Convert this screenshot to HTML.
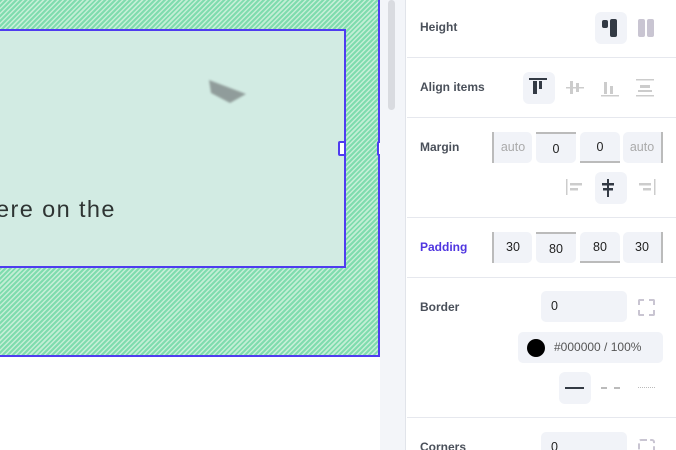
<!DOCTYPE html><html><head><style>
*{box-sizing:border-box;margin:0;padding:0}
html,body{width:676px;height:450px;overflow:hidden}
body{background:#fff;font-family:"Liberation Sans",sans-serif;position:relative}
.a{position:absolute}
.hatch{left:0;top:0;width:380px;height:357px;background:repeating-linear-gradient(135deg,#7fdcae 0 2px,#c4eed6 2px 3.5px);border-right:2px solid #4f3cf0;border-bottom:2px solid #4f3cf0}
.inner{left:-2px;top:29px;width:348px;height:239px;background:#d2ebe3;border:2px solid #4f3cf0}
.h{width:8px;height:15px;background:#fff;border:2px solid #4f3cf0;border-radius:2px}
.lbl{font-size:12px;font-weight:bold;color:#4a505a;left:420px}
.div{left:407px;width:269px;height:1px;background:#e6e8ee}
.box{background:#f1f3f8;border-radius:5px;font-size:12.5px;color:#222;text-align:center;line-height:30px;height:31px}
.ib{width:32px;height:32px;border-radius:6px}
</style></head><body>
<div class="a hatch"></div>
<div class="a inner"></div>
<div class="a" style="left:-4px;top:196px;font-size:23.5px;color:#2e3433;letter-spacing:1.4px">ere on the</div>
<svg class="a" style="left:206px;top:78px" width="44" height="28"><defs><filter id="b"><feGaussianBlur stdDeviation="1"/></filter></defs><polygon points="3,2 40,16 24,25 5,15" fill="#6e7374" opacity=".65" filter="url(#b)"/></svg>
<div class="a h" style="left:338px;top:141px"></div>
<div class="a h" style="left:377px;top:141px"></div>
<div class="a" style="left:380px;top:0;width:26px;height:450px;background:#f3f5f9;border-right:1px solid #e1e4ea"></div>
<div class="a" style="left:388px;top:0;width:7px;height:110px;background:#d9dbe0;border-radius:4px"></div>
<div class="a lbl" style="top:20px">Height</div>
<div class="a ib" style="left:595px;top:12px;background:#f1f3f8"></div>
<div class="a" style="left:602px;top:20px;width:6px;height:8px;background:#333a44;border-radius:2px"></div>
<div class="a" style="left:610px;top:19px;width:7px;height:18px;background:#333a44;border-radius:2px"></div>
<div class="a" style="left:638px;top:19px;width:7px;height:18px;background:#c9c5d2;border-radius:2px"></div>
<div class="a" style="left:647px;top:19px;width:7px;height:18px;background:#c9c5d2;border-radius:2px"></div>
<div class="a div" style="top:57px"></div>
<div class="a lbl" style="top:80px">Align items</div>
<div class="a ib" style="left:523px;top:72px;background:#f1f3f8"></div>
<svg class="a" style="left:528px;top:76px" width="150" height="24" fill="#ccc">
<rect x="1" y="2" width="18" height="2" fill="#333a44"/><rect x="5" y="5" width="4" height="13" fill="#333a44"/><rect x="11" y="5" width="3" height="8" fill="#333a44"/>
<rect x="38" y="11" width="18" height="1.5"/><rect x="42" y="5" width="3" height="13"/><rect x="48" y="7" width="3" height="9"/>
<rect x="73" y="19" width="18" height="1.5"/><rect x="76" y="6" width="3" height="12"/><rect x="82" y="10" width="3" height="8"/>
<rect x="108" y="3" width="18" height="1.5"/><rect x="108" y="19" width="18" height="1.5"/><rect x="112" y="9" width="10" height="3"/><rect x="110" y="14" width="14" height="2"/>
</svg>
<div class="a div" style="top:117px"></div>
<div class="a lbl" style="top:140px">Margin</div>
<div class="a box" style="left:492px;top:132px;width:40px;color:#aaa;border-left:2px solid #bbb;border-radius:0 5px 5px 0">auto</div>
<div class="a box" style="left:536px;top:132px;width:40px;border-top:2px solid #bbb;border-radius:0 0 5px 5px">0</div>
<div class="a box" style="left:580px;top:132px;width:40px;border-bottom:2px solid #bbb;border-radius:5px 5px 0 0">0</div>
<div class="a box" style="left:623px;top:132px;width:40px;color:#aaa;border-right:2px solid #bbb;border-radius:5px 0 0 5px">auto</div>
<div class="a ib" style="left:595px;top:172px;background:#f1f3f8"></div>
<svg class="a" style="left:565px;top:178px" width="100" height="20">
<rect x="1" y="1" width="1.5" height="16" fill="#ccc"/><rect x="5" y="5" width="12" height="2.5" fill="#ccc"/><rect x="5" y="10" width="8" height="2.5" fill="#ccc"/>
<rect x="42" y="1" width="2" height="18" fill="#333a44"/><rect x="37" y="5" width="12" height="2.5" fill="#333a44"/><rect x="38" y="10" width="10" height="2.5" fill="#333a44"/>
<rect x="89" y="1" width="1.5" height="16" fill="#ccc"/><rect x="74" y="5" width="12" height="2.5" fill="#ccc"/><rect x="78" y="10" width="8" height="2.5" fill="#ccc"/>
</svg>
<div class="a div" style="top:217px"></div>
<div class="a lbl" style="top:240px;color:#4f35e0">Padding</div>
<div class="a box" style="left:492px;top:232px;width:40px;border-left:2px solid #bbb;border-radius:0 5px 5px 0">30</div>
<div class="a box" style="left:536px;top:232px;width:40px;border-top:2px solid #bbb;border-radius:0 0 5px 5px">80</div>
<div class="a box" style="left:580px;top:232px;width:40px;border-bottom:2px solid #bbb;border-radius:5px 5px 0 0">80</div>
<div class="a box" style="left:623px;top:232px;width:40px;border-right:2px solid #bbb;border-radius:5px 0 0 5px">30</div>
<div class="a div" style="top:277px"></div>
<div class="a lbl" style="top:300px">Border</div>
<div class="a box" style="left:541px;top:291px;width:86px;text-align:left;padding-left:10px">0</div>
<div class="a" style="left:638px;top:299px;width:17px;height:17px;border:2px dashed #c9c5d2;border-radius:2px"></div>
<div class="a box" style="left:518px;top:332px;width:145px;text-align:left;padding-left:36px;color:#555;font-size:12px">#000000 / 100%</div>
<div class="a" style="left:527px;top:339px;width:18px;height:18px;border-radius:50%;background:#000"></div>
<div class="a ib" style="left:559px;top:372px;background:#f1f3f8"></div>
<div class="a" style="left:565px;top:387px;width:19px;height:2px;background:#333a44"></div>
<div class="a" style="left:601px;top:387px;width:19px;border-top:2px dashed #bbb"></div>
<div class="a" style="left:638px;top:387px;width:17px;border-top:1.5px dotted #bbb"></div>
<div class="a div" style="top:417px"></div>
<div class="a lbl" style="top:440px">Corners</div>
<div class="a box" style="left:541px;top:432px;width:86px;text-align:left;padding-left:10px">0</div>
<div class="a" style="left:638px;top:439px;width:17px;height:17px;border:2px dashed #c9c5d2;border-radius:3px"></div>
</body></html>
